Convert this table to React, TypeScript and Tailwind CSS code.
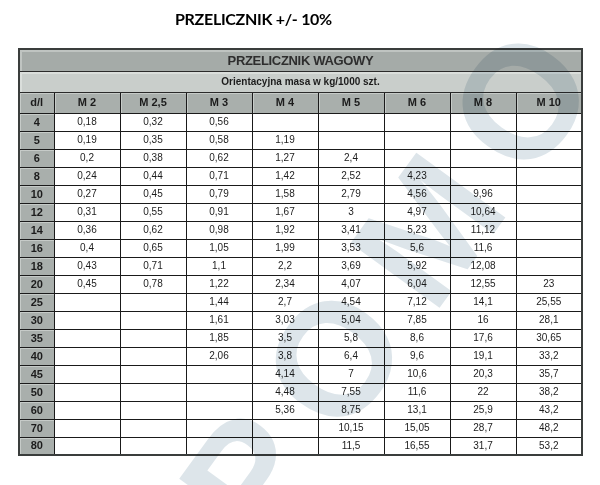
import React from "react";

const COLS = ["M 2", "M 2,5", "M 3", "M 4", "M 5", "M 6", "M 8", "M 10"];

// d/l, then mass per column (empty = no value)
const ROWS: [string, string[]][] = [
  ["4", ["0,18", "0,32", "0,56", "", "", "", "", ""]],
  ["5", ["0,19", "0,35", "0,58", "1,19", "", "", "", ""]],
  ["6", ["0,2", "0,38", "0,62", "1,27", "2,4", "", "", ""]],
  ["8", ["0,24", "0,44", "0,71", "1,42", "2,52", "4,23", "", ""]],
  ["10", ["0,27", "0,45", "0,79", "1,58", "2,79", "4,56", "9,96", ""]],
  ["12", ["0,31", "0,55", "0,91", "1,67", "3", "4,97", "10,64", ""]],
  ["14", ["0,36", "0,62", "0,98", "1,92", "3,41", "5,23", "11,12", ""]],
  ["16", ["0,4", "0,65", "1,05", "1,99", "3,53", "5,6", "11,6", ""]],
  ["18", ["0,43", "0,71", "1,1", "2,2", "3,69", "5,92", "12,08", ""]],
  ["20", ["0,45", "0,78", "1,22", "2,34", "4,07", "6,04", "12,55", "23"]],
  ["25", ["", "", "1,44", "2,7", "4,54", "7,12", "14,1", "25,55"]],
  ["30", ["", "", "1,61", "3,03", "5,04", "7,85", "16", "28,1"]],
  ["35", ["", "", "1,85", "3,5", "5,8", "8,6", "17,6", "30,65"]],
  ["40", ["", "", "2,06", "3,8", "6,4", "9,6", "19,1", "33,2"]],
  ["45", ["", "", "", "4,14", "7", "10,6", "20,3", "35,7"]],
  ["50", ["", "", "", "4,48", "7,55", "11,6", "22", "38,2"]],
  ["60", ["", "", "", "5,36", "8,75", "13,1", "25,9", "43,2"]],
  ["70", ["", "", "", "", "10,15", "15,05", "28,7", "48,2"]],
  ["80", ["", "", "", "", "11,5", "16,55", "31,7", "53,2"]],
];

function Watermark() {
  return (
    <svg
      className="pointer-events-none absolute left-0 top-0 mix-blend-multiply"
      width="600"
      height="485"
      viewBox="0 0 600 485"
    >
      <text
        transform="translate(262 552) rotate(-54)"
        fill="#dde5ea"
        fontFamily="'Liberation Sans', Arial, sans-serif"
        fontWeight="700"
        fontSize="160"
        letterSpacing="30"
      >
        POMO
      </text>
    </svg>
  );
}

export default function App() {
  return (
    <div
      className="relative h-[485px] w-[600px] overflow-hidden bg-white"
      style={{ fontFamily: "'Liberation Sans', Arial, sans-serif" }}
    >
      <div className="flex h-[48px] pl-[175px] pt-[11px]">
        <h1
          className="text-[16px] font-bold leading-none tracking-[-0.3px] text-black"
          style={{ fontFamily: "Lato, 'Open Sans', sans-serif" }}
        >
          PRZELICZNIK +/- 10%
        </h1>
      </div>

      <div className="pl-[18px]">
        <table className="w-[563px] table-fixed border-collapse border-2 border-[#3a3d3c] text-[#1c1c1c]">
          <colgroup>
            <col className="w-[35px]" />
            {COLS.map((c) => (
              <col key={c} className="w-[66px]" />
            ))}
          </colgroup>
          <thead>
            <tr className="h-[22px]">
              <th
                colSpan={9}
                className="border border-[#2a2a2a] bg-[#a5aba8] p-0 text-center text-[13px] font-bold leading-none tracking-tight text-[#2e2e2e] shadow-[inset_2px_2px_0_#bfc4c1]"
              >
                PRZELICZNIK WAGOWY
              </th>
            </tr>
            <tr className="h-[21px]">
              <th
                colSpan={9}
                className="border border-[#2a2a2a] bg-[#c9cecb] p-0 text-center text-[10px] font-bold leading-none shadow-[inset_2px_2px_0_#dadedb]"
              >
                Orientacyjna masa w kg/1000 szt.
              </th>
            </tr>
            <tr className="h-[21px]">
              <th className="border border-[#1a1a1a] bg-[#a9afac] p-0 text-center text-[11px] font-bold leading-none shadow-[inset_1px_1px_0_#c6cbc8]">
                d/l
              </th>
              {COLS.map((c) => (
                <th
                  key={c}
                  className="border border-[#1a1a1a] bg-[#a9afac] p-0 text-center text-[11px] font-bold leading-none shadow-[inset_1px_1px_0_#c6cbc8]"
                >
                  {c}
                </th>
              ))}
            </tr>
          </thead>
          <tbody>
            {ROWS.map(([d, vals]) => (
              <tr key={d} className="h-[18px]">
                <td className="border border-[#1a1a1a] bg-[#a9afac] p-0 text-center text-[11px] font-bold leading-none shadow-[inset_1px_1px_0_#c6cbc8]">
                  {d}
                </td>
                {vals.map((v, i) => (
                  <td
                    key={i}
                    className="border border-[#1a1a1a] bg-white p-0 text-center text-[10px] leading-none"
                  >
                    {v}
                  </td>
                ))}
              </tr>
            ))}
          </tbody>
        </table>
      </div>

      <Watermark />
    </div>
  );
}
